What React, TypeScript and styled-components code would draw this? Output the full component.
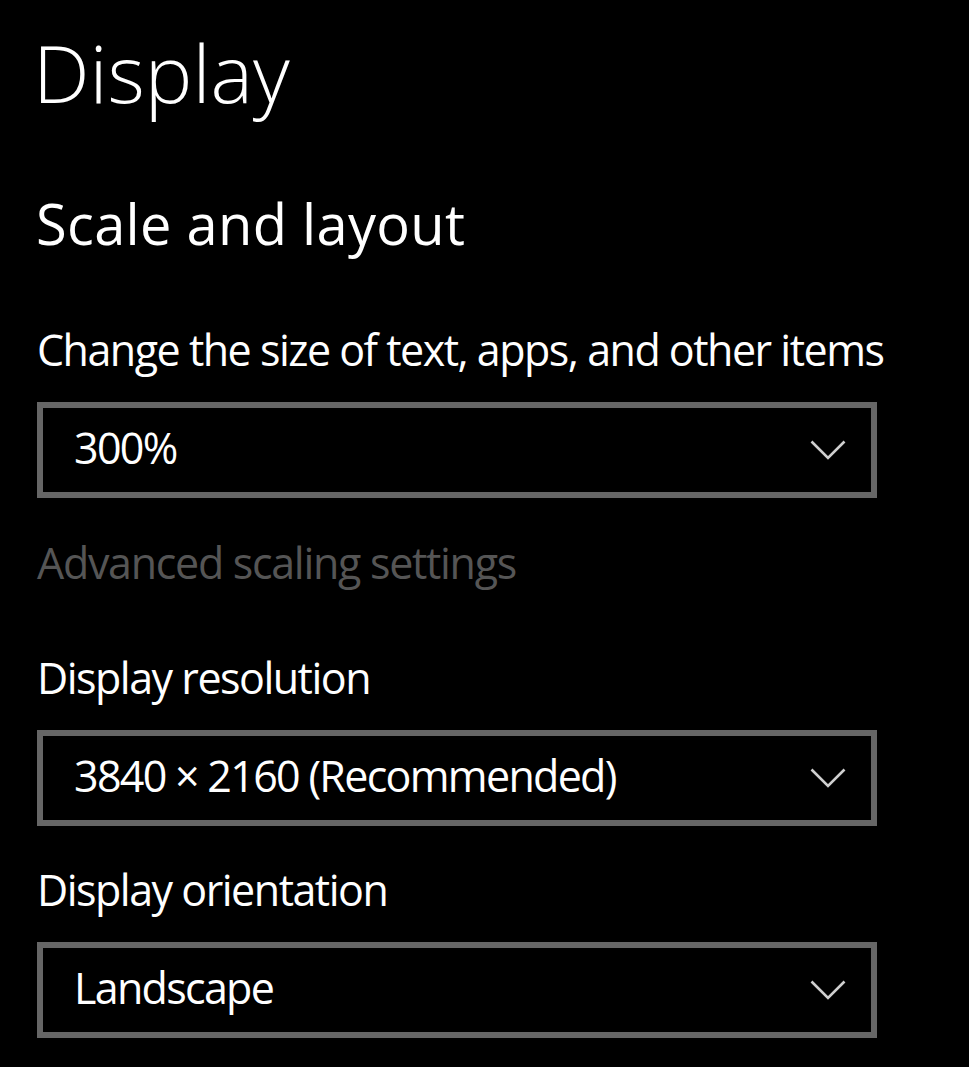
import React from "react";
import styled, { createGlobalStyle } from "styled-components";

const GlobalStyle = createGlobalStyle`
  html, body {
    margin: 0;
    padding: 0;
    background: #000;
  }
  body {
    font-family: "Open Sans", "Noto Sans", sans-serif;
    color: #fff;
  }
`;

const Page = styled.div`
  width: 969px;
  height: 1067px;
  box-sizing: border-box;
  padding: 22px 0 0 37px;
  background: #000;
  display: flex;
  flex-direction: column;
  overflow: hidden;
`;

const Title = styled.h1`
  margin: 0 0 0 -4px;
  font-size: 80px;
  font-weight: 300;
  line-height: 100px;
  color: #fff;
`;

const Subtitle = styled.h2`
  margin: 61px 0 0 -1px;
  font-size: 56px;
  font-weight: 400;
  line-height: 80px;
  letter-spacing: 0.3px;
  color: #fff;
`;

const Section = styled.div<{ $gapTop: number }>`
  margin-top: ${(p) => p.$gapTop}px;
  display: flex;
  flex-direction: column;
  gap: 22px;
`;

const Label = styled.div`
  font-size: 43px;
  line-height: 60px;
  letter-spacing: -1.5px;
  color: #fff;
  white-space: nowrap;
`;

const LinkText = styled.div<{ $gapTop: number }>`
  margin-top: ${(p) => p.$gapTop}px;
  font-size: 43px;
  line-height: 60px;
  letter-spacing: -1.3px;
  color: #555;
  white-space: nowrap;
`;

const Dropdown = styled.div`
  width: 840px;
  height: 96px;
  box-sizing: border-box;
  border: 6px solid #666;
  display: flex;
  align-items: center;
  justify-content: space-between;
  padding: 0 25px 5px 31px;
`;

const Value = styled.span`
  font-size: 43px;
  line-height: 60px;
  letter-spacing: -1.7px;
  color: #fff;
  white-space: nowrap;
`;

const ChevronIcon = styled.svg`
  flex: none;
  margin-top: 5px;
`;

const Chevron = () => (
  <ChevronIcon width="36" height="20" viewBox="0 0 36 20" fill="none">
    <polyline
      points="1.5,1.5 18,18 34.5,1.5"
      stroke="#cfcfcf"
      strokeWidth="2.6"
      fill="none"
    />
  </ChevronIcon>
);

const Select = ({ value }: { value: string }) => (
  <Dropdown>
    <Value>{value}</Value>
    <Chevron />
  </Dropdown>
);

export default function App() {
  return (
    <>
      <GlobalStyle />
      <Page>
        <Title>Display</Title>
        <Subtitle>Scale and layout</Subtitle>
        <Section $gapTop={57}>
          <Label>Change the size of text, apps, and other items</Label>
          <Select value="300%" />
        </Section>
        <LinkText $gapTop={35}>Advanced scaling settings</LinkText>
        <Section $gapTop={55}>
          <Label>Display resolution</Label>
          <Select value="3840 × 2160 (Recommended)" />
        </Section>
        <Section $gapTop={34}>
          <Label>Display orientation</Label>
          <Select value="Landscape" />
        </Section>
      </Page>
    </>
  );
}
